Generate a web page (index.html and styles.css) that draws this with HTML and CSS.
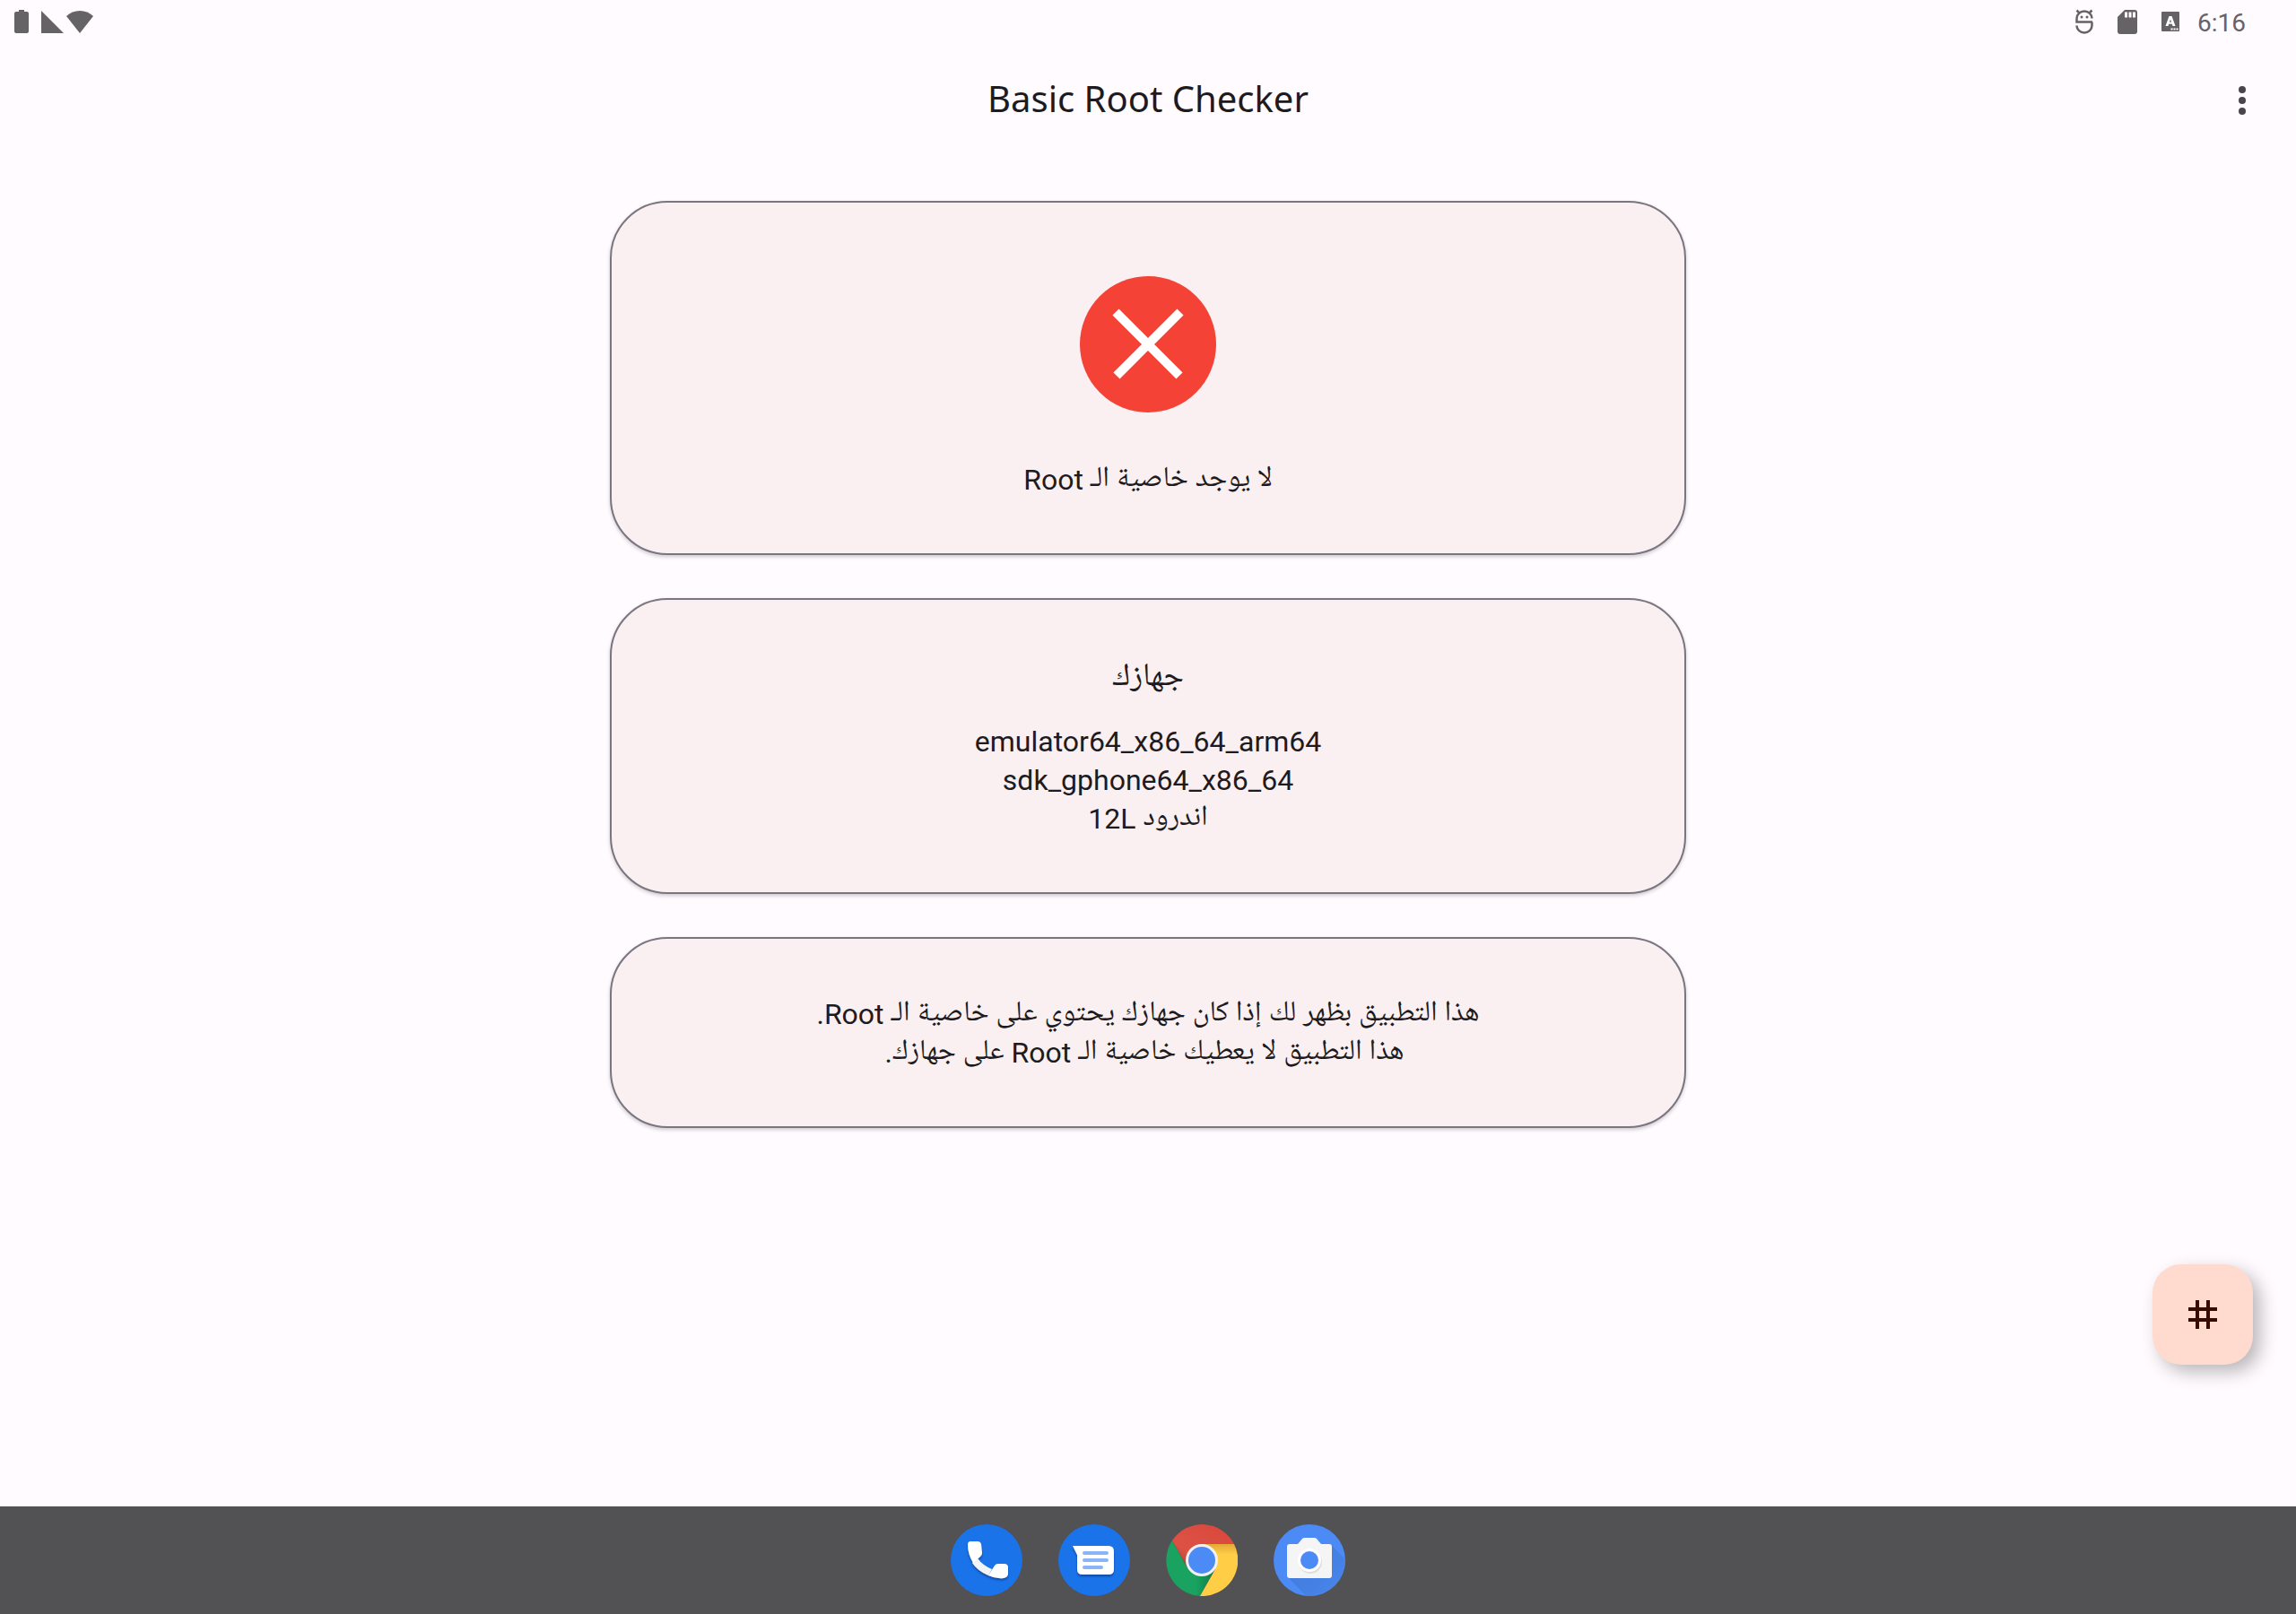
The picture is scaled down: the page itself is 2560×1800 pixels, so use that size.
FILE: index.html
```html
<!DOCTYPE html>
<html lang="ar">
<head>
<meta charset="utf-8">
<title>Basic Root Checker</title>
<meta name="viewport" content="width=device-width, initial-scale=1">
<link rel="stylesheet" href="styles.css">
</head>
<body>
<div class="status-bar">
  <div class="status-group status-system">
    <svg class="battery" width="16" height="26" viewBox="0 0 16 26" aria-hidden="true"><path d="M5 0h6v2h3a2 2 0 0 1 2 2v20a2 2 0 0 1-2 2H2a2 2 0 0 1-2-2V4a2 2 0 0 1 2-2h3z"/></svg>
    <svg width="25" height="25" viewBox="0 0 25 25" aria-hidden="true"><path d="M0 0v25h25z"/></svg>
    <svg width="30" height="25" viewBox="0 0 30 25" aria-hidden="true"><path d="M0 6C8-2 22-2 30 6L15 25z"/></svg>
  </div>
  <div class="status-group status-notices">
    <svg width="20" height="28" viewBox="0 0 20 28" aria-hidden="true"><path class="line" d="M19 14.500H1.500V10.500a8.500 8 0 0 1 17 0M1.500 18.500a8.500 8 0 0 0 17 0v-4M4.500 4.500L1.500 1.500M15.500 4.500l3-3"/><circle cx="7" cy="9" r="1.500"/><circle cx="13" cy="9" r="1.500"/></svg>
    <svg width="22" height="27" viewBox="0 0 22 27" aria-hidden="true"><path fill-rule="evenodd" d="M8 0h11a3 3 0 0 1 3 3v21a3 3 0 0 1-3 3H3a3 3 0 0 1-3-3V8zM8 2.500v6h3v-6zM12.500 2.500v6h3v-6zM17 2.500v6h3v-6z"/></svg>
    <svg width="20" height="22" viewBox="0 0 20 22" aria-hidden="true"><rect width="20" height="22" rx="1"/><path fill="#fff" fill-rule="evenodd" d="M8.500 5h3L15.500 16h-3l-.8-2.200H8.200L7.500 16h-3zM10 8.500L9 11.700h2z"/><path class="dots" d="M10.500 19.500h8.500"/></svg>
    <time class="clock">6:16</time>
  </div>
</div>
<header class="app-bar">
  <h1 class="title">Basic Root Checker</h1>
  <button class="menu" type="button" aria-label="More options">
    <svg width="8" height="32" viewBox="0 0 8 32"><circle cx="4" cy="4" r="4"/><circle cx="4" cy="16" r="4"/><circle cx="4" cy="28" r="4"/></svg>
  </button>
</header>
<main class="content" dir="rtl">
  <section class="card result">
    <svg width="152" height="152" viewBox="0 0 152 152" aria-hidden="true"><circle cx="76" cy="76" r="76" fill="#f44336"/><path d="M40 40l71 71M112 40l-71 71" stroke="#fff" stroke-width="10"/></svg>
    <p class="text">لا يوجد خاصية الـ Root</p>
  </section>
  <section class="card device">
    <h2 class="heading">جهازك</h2>
    <p class="text">emulator64_x86_64_arm64<br>sdk_gphone64_x86_64<br>اندرود 12L</p>
  </section>
  <section class="card">
    <p class="text">هذا التطبيق بظهر لك إذا كان جهازك يحتوي على خاصية الـ Root.<br>&nbsp;هذا التطبيق لا يعطيك خاصية الـ Root على جهازك.</p>
  </section>
</main>
<button class="fab" type="button" aria-label="Check root">
  <svg width="32" height="32" viewBox="0 0 32 32"><path d="M10 0v32M22 0v32M0 10h32M0 22h32" stroke="#370b00" stroke-width="4"/></svg>
</button>
<nav class="taskbar">
  <button class="app" type="button" aria-label="Phone">
    <svg viewBox="0 0 80 80">
      <defs><filter id="soft" x="-30%" y="-30%" width="160%" height="160%"><feDropShadow dx="0" dy="2" stdDeviation="1" flood-color="#0b3a86" flood-opacity=".75"/></filter></defs>
      <circle cx="40" cy="40" r="40" fill="#1a73e8"/>
      <g filter="url(#soft)"><path fill="#f1f3f4" d="M30 38Q36 46 46 50L42 57Q30 52 24 43z"/><path fill="#fff" d="M22 19h8q3 0 4 3l1 10q0 2-2 4l-8 7q-6-10-6-20 0-4 3-4zM42 57l7-11q1-2 4-2h7q3 0 4 3v8q0 4-5 5-9 1-17-3z"/></g>
    </svg>
  </button>
  <button class="app" type="button" aria-label="Messages">
    <svg viewBox="0 0 80 80"><circle cx="40" cy="40" r="40" fill="#1a73e8"/><path filter="url(#soft)" fill="#fff" d="M16 24h40q6 0 6 6v20q0 6-6 6H27q-6 0-6-6V34z"/><path d="M29 32h25M29 40h25M29 48h19" stroke="#8ab4f8" stroke-width="4" stroke-linecap="round"/></svg>
  </button>
  <button class="app" type="button" aria-label="Chrome">
    <svg viewBox="0 0 80 80">
      <defs>
        <linearGradient id="red" x1="0" y1="1" x2="1" y2="0"><stop offset="0" stop-color="#b83a30"/><stop offset=".3" stop-color="#dd5144"/><stop offset="1" stop-color="#d8483b"/></linearGradient>
        <linearGradient id="green" x1="0" y1="0" x2="1" y2="0"><stop offset=".6" stop-color="#1aa260"/><stop offset="1" stop-color="#0d7a45"/></linearGradient>
        <linearGradient id="yellow" x1="0" y1="0" x2="0" y2="1"><stop offset="0" stop-color="#e3a937"/><stop offset=".2" stop-color="#ffcd46"/></linearGradient>
      </defs>
      <path fill="url(#green)" d="M7 18A40 40 0 0 0 38 80L55 49 24 49z"/>
      <path fill="url(#yellow)" d="M40 22h36A40 40 0 0 1 38 80L55 50z"/>
      <path fill="url(#red)" d="M7 18A40 40 0 0 1 76 22H40L23 46z"/>
      <circle cx="40" cy="40" r="18" fill="#f1f1f1"/><circle cx="40" cy="40" r="15" fill="#4c8bf5"/>
    </svg>
  </button>
  <button class="app" type="button" aria-label="Camera">
    <svg viewBox="0 0 80 80">
      <defs><clipPath id="disc"><circle cx="40" cy="40" r="40"/></clipPath><linearGradient id="shade" x1="0" y1="0" x2="1" y2="1"><stop offset="0" stop-color="#3f78d6"/><stop offset="1" stop-color="#4c8bf5"/></linearGradient></defs>
      <circle cx="40" cy="40" r="40" fill="#4c8bf5"/><path clip-path="url(#disc)" fill="url(#shade)" d="M65 24l30 30v46H56L16 59z"/>
      <path fill="#f5f5f5" d="M18 22h9l5-6q1-1 3-1h10q2 0 3 1l5 6h9q3 0 3 3v32q0 3-3 3H18q-3 0-3-3V25q0-3 3-3z"/>
      <circle cx="41" cy="42" r="13" fill="#dedede"/><circle cx="40" cy="40" r="13" fill="#fff"/><circle cx="40" cy="40" r="10" fill="#4c8bf5"/>
    </svg>
  </button>
</nav>
</body>
</html>
```
FILE: styles.css
```css
* { box-sizing: border-box; }

body {
  margin: 0;
  min-height: 100vh;
  display: flex;
  flex-direction: column;
  background: #fffbff;
  color: #1d1b20;
  font-family: Roboto, "Noto Naskh Arabic UI", "Noto Naskh Arabic", "Noto Sans Arabic", "DejaVu Sans", sans-serif;
}

button { border: 0; padding: 0; background: none; cursor: pointer; }
svg { display: block; }
h1, h2, p { margin: 0; font-weight: 400; }

.status-bar {
  display: flex;
  justify-content: space-between;
  height: 48px;
  padding: 0 56px 0 16px;
  color: #666367;
}
.status-group { display: flex; align-items: center; fill: currentColor; }
.status-system { gap: 3px; }
.battery { margin-right: 11px; }
.status-notices { gap: 27px; }
.line { fill: none; stroke: currentColor; stroke-width: 2.5; }
.dots { stroke: #fff; stroke-width: 2; stroke-dasharray: 2 1; }
.clock { font-size: 28px; line-height: 44px; padding-top: 4px; margin-left: -7px; }

.app-bar {
  display: grid;
  grid-template-columns: 1fr auto 1fr;
  align-items: center;
  height: 128px;
  padding: 0 36px;
}
.title {
  grid-column: 2;
  padding-bottom: 4px;
  font-family: "Noto Sans", sans-serif;
  font-size: 40px;
  line-height: 56px;
}
.menu {
  justify-self: end;
  display: grid;
  place-items: center;
  width: 48px;
  height: 96px;
  fill: #49454f;
}

.content {
  flex: 1;
  display: flex;
  flex-direction: column;
  align-items: center;
  gap: 48px;
  padding: 48px 32px;
}
.card {
  display: flex;
  flex-direction: column;
  align-items: center;
  width: 100%;
  max-width: 1200px;
  padding: 63px 64px 60px;
  border: 2px solid #7a757f;
  border-radius: 64px;
  background: #faf0f2;
  box-shadow: 0 2px 4px rgba(0, 0, 0, 0.2);
  text-align: center;
}
.result { gap: 54px; padding-top: 82px; }
.device { gap: 24px; }
.text { font-size: 32px; line-height: 43px; }
.heading { font-size: 36px; line-height: 50px; }

.fab {
  position: fixed;
  right: 48px;
  bottom: 278px;
  display: grid;
  place-items: center;
  width: 112px;
  height: 112px;
  border-radius: 32px;
  background: #ffdbcf;
  box-shadow: 8px 8px 20px rgba(0, 0, 0, 0.28);
}

.taskbar {
  display: flex;
  justify-content: center;
  align-items: center;
  gap: 40px;
  height: 120px;
  background: #525254;
}
.app { width: 80px; height: 80px; border-radius: 50%; }
```
